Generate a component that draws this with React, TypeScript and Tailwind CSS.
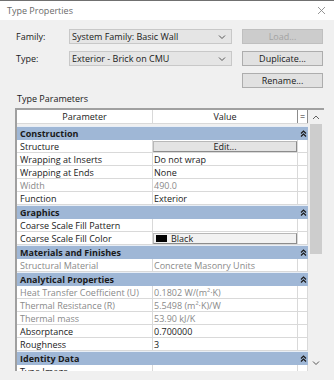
import React from 'react';

type Row =
  | { kind: 'cat'; label: string }
  | { kind: 'row'; label: string; value?: string; dim?: boolean; button?: 'edit' | 'color' };

const rows: Row[] = [
  { kind: 'cat', label: 'Construction' },
  { kind: 'row', label: 'Structure', button: 'edit' },
  { kind: 'row', label: 'Wrapping at Inserts', value: 'Do not wrap' },
  { kind: 'row', label: 'Wrapping at Ends', value: 'None' },
  { kind: 'row', label: 'Width', value: '490.0', dim: true },
  { kind: 'row', label: 'Function', value: 'Exterior' },
  { kind: 'cat', label: 'Graphics' },
  { kind: 'row', label: 'Coarse Scale Fill Pattern', value: '' },
  { kind: 'row', label: 'Coarse Scale Fill Color', button: 'color' },
  { kind: 'cat', label: 'Materials and Finishes' },
  { kind: 'row', label: 'Structural Material', value: 'Concrete Masonry Units', dim: true },
  { kind: 'cat', label: 'Analytical Properties' },
  { kind: 'row', label: 'Heat Transfer Coefficient (U)', value: '0.1802 W/(m²·K)', dim: true },
  { kind: 'row', label: 'Thermal Resistance (R)', value: '5.5498 (m²·K)/W', dim: true },
  { kind: 'row', label: 'Thermal mass', value: '53.90 kJ/K', dim: true },
  { kind: 'row', label: 'Absorptance', value: '0.700000' },
  { kind: 'row', label: 'Roughness', value: '3' },
  { kind: 'cat', label: 'Identity Data' },
  { kind: 'row', label: 'Type Image', value: '' },
];

function Chevron() {
  return (
    <svg width="8" height="6" viewBox="0 0 8 6" className="text-[#555]">
      <path d="M1 1.5 L4 4.5 L7 1.5" fill="none" stroke="currentColor" strokeWidth="1" />
    </svg>
  );
}

function Collapse() {
  return (
    <svg width="7" height="7" viewBox="0 0 7 7">
      <path d="M1 3.5 L3.5 1 L6 3.5 M1 6.5 L3.5 4 L6 6.5" fill="none" stroke="#1a1a1a" strokeWidth="1.2" />
    </svg>
  );
}

function Combo({ text }: { text: string }) {
  return (
    <div className="w-[163px] h-[15px] bg-[#e5e5e5] border border-[#c8c8c8] flex items-center justify-between pl-[2px] pr-[5px] text-[#1a1a1a]">
      <span>{text}</span>
      <Chevron />
    </div>
  );
}

function Btn({ text, disabled }: { text: string; disabled?: boolean }) {
  return (
    <div
      className={
        disabled
          ? 'w-[81px] h-[15px] bg-[#cccccc] border border-[#bfbfbf] flex items-center justify-center text-[#a3a3a3]'
          : 'w-[81px] h-[15px] bg-[#e1e1e1] border border-[#adadad] flex items-center justify-center text-[#1a1a1a]'
      }
    >
      {text}
    </div>
  );
}

export default function App() {
  return (
    <div className="w-[334px] h-[380px] bg-[#f0f0f0] overflow-hidden text-[9px] leading-none text-[#1a1a1a] border-t border-[#707070]" style={{ fontFamily: '"Open Sans", "Noto Sans", sans-serif' }}>
      {/* title bar */}
      <div className="h-[19px] bg-white flex items-center justify-between pl-[7px] pr-[8px]">
        <span className="text-[9px] text-[#6a6a6a]">Type Properties</span>
        <svg width="9" height="9" viewBox="0 0 9 9">
          <path d="M1 1 L8 8 M8 1 L1 8" stroke="#8a8a8a" strokeWidth="0.9" />
        </svg>
      </div>

      {/* family / type */}
      <div className="flex pl-[16px] pt-[9px] gap-[10px]">
        <div className="flex flex-col gap-[7px]">
          <div className="flex items-center h-[15px]">
            <span className="w-[53px]">Family:</span>
            <Combo text="System Family: Basic Wall" />
          </div>
          <div className="flex items-center h-[15px]">
            <span className="w-[53px]">Type:</span>
            <Combo text="Exterior - Brick on CMU" />
          </div>
        </div>
        <div className="flex flex-col gap-[7px]">
          <Btn text="Load..." disabled />
          <Btn text="Duplicate..." />
          <Btn text="Rename..." />
        </div>
      </div>

      <div className="pl-[17px] pt-[6px] pb-[5px]">Type Parameters</div>

      {/* grid */}
      <div className="ml-[15px] w-[309px] h-[263px] border-t-2 border-l-2 border-[#a0a0a0] flex overflow-hidden">
        <div className="w-[291px] flex flex-col">
          <div className="flex h-[14px] shrink-0 bg-white border-b border-[#d9d9d9] mb-[2px]">
            <div className="w-[136px] flex items-center justify-center border-r border-[#d9d9d9]">Parameter</div>
            <div className="w-[145px] flex items-center justify-center border-r border-[#8c8c8c]">Value</div>
            <div className="w-[10px] flex items-center justify-center border-r border-[#8c8c8c]">=</div>
          </div>
          {rows.map((r, i) =>
            r.kind === 'cat' ? (
              <div key={i} className="flex items-center h-[14px] shrink-0 bg-[#9fb7d6] border-t border-[#e8eef6] font-bold pl-[3px]">
                <span className="flex-1">{r.label}</span>
                <span className="w-[10px] flex justify-center">
                  <Collapse />
                </span>
              </div>
            ) : (
              <div key={i} className={r.dim ? 'flex h-[13px] shrink-0 bg-white text-[#8a8a8a]' : 'flex h-[13px] shrink-0 bg-white'}>
                <div className="w-[136px] flex items-center pl-[3px] border-r border-b border-[#d9d9d9] whitespace-nowrap">{r.label}</div>
                <div className="w-[145px] flex items-center border-r border-b border-[#d9d9d9] whitespace-nowrap">
                  {r.button === 'edit' ? (
                    <div className="w-full h-[11px] bg-[#e3e3e3] border border-[#b8b8b8] border-r-[#8c8c8c] border-b-[#8c8c8c] flex items-center justify-center">Edit...</div>
                  ) : r.button === 'color' ? (
                    <div className="w-full h-[11px] bg-[#f2f2f2] border border-[#b8b8b8] border-r-[#8c8c8c] border-b-[#8c8c8c] flex items-center pl-[2px] gap-[4px]">
                      <span className="w-[11px] h-[7px] bg-black" />
                      <span>Black</span>
                    </div>
                  ) : (
                    <span className="pl-[1px]">{r.value}</span>
                  )}
                </div>
                <div className="w-[10px] border-r border-b border-[#d9d9d9]" />
              </div>
            ),
          )}
        </div>
        {/* scrollbar */}
        <div className="w-[16px] flex flex-col items-center bg-[#f0f0f0]">
          <div className="h-[14px] shrink-0 flex items-center justify-center">
            <svg width="8" height="5" viewBox="0 0 8 5">
              <path d="M1 4 L4 1 L7 4" fill="none" stroke="#606060" strokeWidth="1" />
            </svg>
          </div>
          <div className="w-[12px] h-[130px] shrink-0 bg-[#cdcdcd]" />
          <div className="flex-1" />
          <div className="h-[16px] shrink-0 flex items-center justify-center">
            <Chevron />
          </div>
        </div>
      </div>
    </div>
  );
}
